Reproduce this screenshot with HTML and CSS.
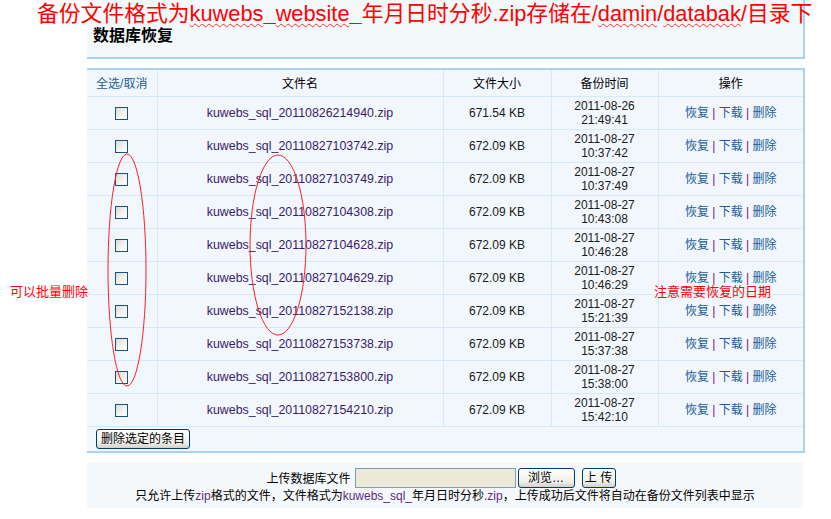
FILE: index.html
```html
<!DOCTYPE html>
<html lang="zh-CN">
<head>
  <meta charset="UTF-8">
  <title>数据库恢复</title>
  <link rel="stylesheet" href="styles.css">
</head>
<body>
  <div class="page">
    <div class="panel-head">
      <h2>数据库恢复</h2>
    </div>

    <div class="panel-list">
      <table class="backup-table">
        <colgroup>
          <col class="c-check">
          <col class="c-name">
          <col class="c-size">
          <col class="c-time">
          <col class="c-ops">
        </colgroup>
        <thead>
          <tr>
            <th><a href="#" class="link">全选/取消</a></th>
            <th>文件名</th>
            <th>文件大小</th>
            <th>备份时间</th>
            <th>操作</th>
          </tr>
        </thead>
        <tbody id="backup-rows"></tbody>
      </table>
      <div class="list-foot">
        <button type="button" class="xp-btn">删除选定的条目</button>
      </div>
    </div>

    <div class="upload">
      <div class="upload-row">
        <label for="upfile">上传数据库文件</label>
        <span class="file-box" id="upfile"></span>
        <button type="button" class="xp-btn browse">浏览…</button>
        <button type="button" class="xp-btn send">上 传</button>
      </div>
      <p class="upload-tip">只允许上传<span class="hl">zip</span>格式的文件，文件格式为<span class="hl">kuwebs_sql_</span>年月日时分秒<span class="hl">.zip</span>，上传成功后文件将自动在备份文件列表中显示</p>
    </div>
  </div>

  <!-- 标注 -->
  <div class="note note-top">备份文件格式为<span class="sq">kuwebs</span><b class="us">_</b><span class="sq">website</span><b class="us">_</b>年月日时分秒.zip存储在/<span class="sq">damin</span>/<span class="sq">databak</span>/目录下</div>
  <div class="note note-left">可以批量删除</div>
  <div class="note note-right">注意需要恢复的日期</div>
  <svg class="marks" width="831" height="519" viewBox="0 0 831 519">
    <ellipse cx="127" cy="270" rx="19" ry="116" fill="none" stroke="#ff2020" stroke-width="1"/>
    <ellipse cx="278" cy="245" rx="28" ry="90" fill="none" stroke="#ff2020" stroke-width="1"/>
  </svg>

  <script>
    var backups = [
      ['20110826214940', '671.54 KB', '2011-08-26', '21:49:41'],
      ['20110827103742', '672.09 KB', '2011-08-27', '10:37:42'],
      ['20110827103749', '672.09 KB', '2011-08-27', '10:37:49'],
      ['20110827104308', '672.09 KB', '2011-08-27', '10:43:08'],
      ['20110827104628', '672.09 KB', '2011-08-27', '10:46:28'],
      ['20110827104629', '672.09 KB', '2011-08-27', '10:46:29'],
      ['20110827152138', '672.09 KB', '2011-08-27', '15:21:39'],
      ['20110827153738', '672.09 KB', '2011-08-27', '15:37:38'],
      ['20110827153800', '672.09 KB', '2011-08-27', '15:38:00'],
      ['20110827154210', '672.09 KB', '2011-08-27', '15:42:10']
    ];

    var html = '';
    backups.forEach(function (b) {
      html += '<tr>' +
        '<td><span class="chk"></span></td>' +
        '<td class="fname">kuwebs_sql_' + b[0] + '.zip</td>' +
        '<td class="fsize">' + b[1] + '</td>' +
        '<td class="ftime">' + b[2] + '<br>' + b[3] + '</td>' +
        '<td><a href="#" class="link">恢复</a> <i>|</i> <a href="#" class="link">下载</a> <i>|</i> <a href="#" class="link">删除</a></td>' +
        '</tr>';
    });
    document.getElementById('backup-rows').innerHTML = html;
  </script>
</body>
</html>
```

FILE: styles.css
```css
:root {
  --panel-bg: #f3f8fb;
  --list-bg: #f1f7fc;
  --frame: #a9d3f3;
  --grid: #d6e9f8;
  --link: #1d5d9b;
  --name: #3a1b6a;
  --note: #ff0000;
}

* {
  margin: 0;
  padding: 0;
  box-sizing: border-box;
}

body {
  font-family: "Liberation Sans", "Noto Sans CJK SC", sans-serif;
  font-size: 12px;
  color: #222;
  background: #fff;
  width: 831px;
  height: 519px;
  overflow: hidden;
  position: relative;
}

.page {
  margin-left: 87px;
  width: 718px;
}

.panel-head {
  height: 59px;
  background: var(--panel-bg);
  border-right: 2px solid var(--frame);
  border-bottom: 2px solid var(--frame);
}

.panel-head h2 {
  font-size: 16px;
  font-weight: bold;
  color: #000;
  padding: 26px 0 0 6px;
  line-height: 20px;
}

.panel-list {
  margin-top: 9px;
  background: var(--list-bg);
  border-top: 2px solid var(--frame);
  border-right: 2px solid var(--frame);
  border-bottom: 2px solid var(--frame);
}

.backup-table {
  width: 716px;
  border-collapse: collapse;
  table-layout: fixed;
}

.c-check { width: 70px; }
.c-name { width: 286px; }
.c-size { width: 108px; }
.c-time { width: 107px; }
.c-ops { width: 145px; }

.backup-table th,
.backup-table td {
  border: 1px solid var(--grid);
  text-align: center;
  vertical-align: middle;
  font-weight: normal;
}

.backup-table tr > :first-child { border-left: none; }
.backup-table tr > :last-child { border-right: none; }
.backup-table thead th { border-top: none; }

.backup-table th {
  height: 26px;
  color: #000;
}

.backup-table td {
  height: 33px;
  line-height: 14px;
}

.link {
  color: var(--link);
  text-decoration: none;
}

.backup-table i {
  font-style: normal;
  color: #80107f;
}

.fname {
  color: var(--name);
  font-size: 12.4px;
}

.fsize { color: #1a1a1a; }
.ftime { color: #1a1a1a; }

.chk {
  display: inline-block;
  width: 13px;
  height: 13px;
  border: 1px solid #1c5180;
  background: linear-gradient(135deg, #dcdcd6 0%, #f4f4f0 60%, #fff 100%);
  vertical-align: middle;
}

.list-foot {
  padding: 2px 0 2px 9px;
}

.xp-btn {
  font-family: inherit;
  font-size: 12px;
  height: 20px;
  padding: 0 4px;
  color: #000;
  border: 1px solid #003c74;
  border-radius: 3px;
  background: linear-gradient(#ffffff, #f0f0ea 70%, #d6d0c5);
  line-height: 18px;
}

.upload {
  margin-top: 9px;
  width: 716px;
  height: 46px;
  background: #f5f8fa;
  text-align: center;
}

.upload-row {
  display: flex;
  justify-content: center;
  align-items: center;
  gap: 2px;
  padding-top: 6px;
  padding-right: 8px;
}

.upload-row label {
  margin-right: 2px;
  color: #000;
}

.file-box {
  display: inline-block;
  width: 161px;
  height: 20px;
  background: #ece9d8;
  border: 1px solid #7f9db9;
}

.browse {
  width: 57px;
  margin-right: 5px;
}

.send {
  width: 34px;
  padding: 0;
}

.upload-tip {
  color: #000;
  line-height: 14px;
  margin-top: 1px;
}

.hl { color: #5b2a86; }

/* 红色标注 */
.note {
  position: absolute;
  color: var(--note);
  white-space: nowrap;
}

.note-top {
  left: 37px;
  top: 0;
  font-size: 21.8px;
  line-height: 28px;
}

.note-top .sq {
  text-decoration: underline wavy #ff3030;
  text-decoration-thickness: 1px;
  text-underline-offset: 2px;
}

.note-top .us {
  font-weight: bold;
}

.note-left {
  left: 10px;
  top: 281px;
  font-size: 13px;
}

.note-right {
  left: 654px;
  top: 281px;
  font-size: 13px;
}

.marks {
  position: absolute;
  left: 0;
  top: 0;
  pointer-events: none;
}
```
